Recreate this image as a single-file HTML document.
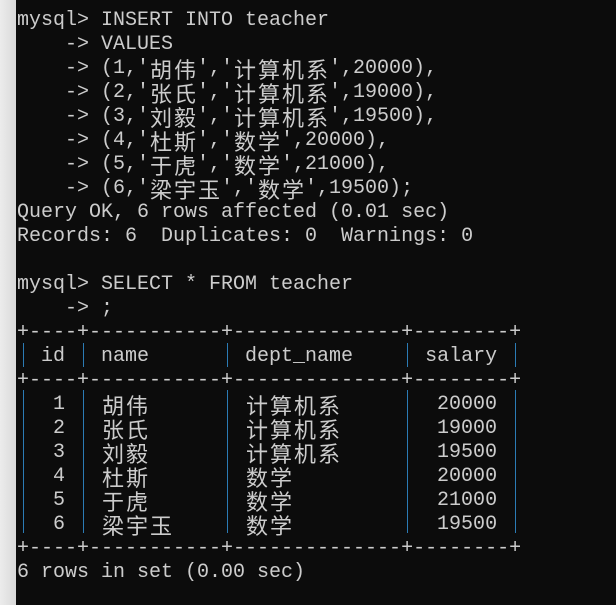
<!DOCTYPE html>
<html><head><meta charset="utf-8">
<style>
html,body{margin:0;padding:0;}
body{width:616px;height:605px;background:#0c0c0c;position:relative;overflow:hidden;
font-family:"Liberation Mono",monospace;font-size:20px;color:#cccccc;}
#strip{position:absolute;left:0;top:0;width:16px;height:605px;background:linear-gradient(to right,#ececec,#d9d9d9);}
.l{position:absolute;left:17px;height:24px;line-height:24px;white-space:pre;}
.c{display:inline-block;width:24px;text-align:center;font-family:"Noto Sans CJK SC",sans-serif;font-size:22px;line-height:24px;vertical-align:top;}
.v{position:absolute;width:1px;background:#2b7bb5;}
</style></head><body>
<div id="strip"></div>
<div class="l" style="top:9px">mysql&gt; INSERT INTO teacher</div>
<div class="l" style="top:33px">    -&gt; VALUES</div>
<div class="l" style="top:57px">    -&gt; (1,'<span class="c">胡</span><span class="c">伟</span>','<span class="c">计</span><span class="c">算</span><span class="c">机</span><span class="c">系</span>',20000),</div>
<div class="l" style="top:81px">    -&gt; (2,'<span class="c">张</span><span class="c">氏</span>','<span class="c">计</span><span class="c">算</span><span class="c">机</span><span class="c">系</span>',19000),</div>
<div class="l" style="top:105px">    -&gt; (3,'<span class="c">刘</span><span class="c">毅</span>','<span class="c">计</span><span class="c">算</span><span class="c">机</span><span class="c">系</span>',19500),</div>
<div class="l" style="top:129px">    -&gt; (4,'<span class="c">杜</span><span class="c">斯</span>','<span class="c">数</span><span class="c">学</span>',20000),</div>
<div class="l" style="top:153px">    -&gt; (5,'<span class="c">于</span><span class="c">虎</span>','<span class="c">数</span><span class="c">学</span>',21000),</div>
<div class="l" style="top:177px">    -&gt; (6,'<span class="c">梁</span><span class="c">宇</span><span class="c">玉</span>','<span class="c">数</span><span class="c">学</span>',19500);</div>
<div class="l" style="top:201px">Query OK, 6 rows affected (0.01 sec)</div>
<div class="l" style="top:225px">Records: 6  Duplicates: 0  Warnings: 0</div>
<div class="l" style="top:273px">mysql&gt; SELECT * FROM teacher</div>
<div class="l" style="top:297px">    -&gt; ;</div>
<div class="l" style="top:321px">+----+-----------+--------------+--------+</div>
<div class="l" style="top:345px">  id   name        dept_name      salary  </div>
<div class="l" style="top:369px">+----+-----------+--------------+--------+</div>
<div class="l" style="top:393px">   1   <span class="c">胡</span><span class="c">伟</span>        <span class="c">计</span><span class="c">算</span><span class="c">机</span><span class="c">系</span>        20000  </div>
<div class="l" style="top:417px">   2   <span class="c">张</span><span class="c">氏</span>        <span class="c">计</span><span class="c">算</span><span class="c">机</span><span class="c">系</span>        19000  </div>
<div class="l" style="top:441px">   3   <span class="c">刘</span><span class="c">毅</span>        <span class="c">计</span><span class="c">算</span><span class="c">机</span><span class="c">系</span>        19500  </div>
<div class="l" style="top:465px">   4   <span class="c">杜</span><span class="c">斯</span>        <span class="c">数</span><span class="c">学</span>            20000  </div>
<div class="l" style="top:489px">   5   <span class="c">于</span><span class="c">虎</span>        <span class="c">数</span><span class="c">学</span>            21000  </div>
<div class="l" style="top:513px">   6   <span class="c">梁</span><span class="c">宇</span><span class="c">玉</span>      <span class="c">数</span><span class="c">学</span>            19500  </div>
<div class="l" style="top:537px">+----+-----------+--------------+--------+</div>
<div class="l" style="top:561px">6 rows in set (0.00 sec)</div>
<div class="v" style="left:23px;top:343px;height:24px"></div>
<div class="v" style="left:83px;top:343px;height:24px"></div>
<div class="v" style="left:227px;top:343px;height:24px"></div>
<div class="v" style="left:407px;top:343px;height:24px"></div>
<div class="v" style="left:515px;top:343px;height:24px"></div>
<div class="v" style="left:23px;top:390px;height:143px"></div>
<div class="v" style="left:83px;top:390px;height:143px"></div>
<div class="v" style="left:227px;top:390px;height:143px"></div>
<div class="v" style="left:407px;top:390px;height:143px"></div>
<div class="v" style="left:515px;top:390px;height:143px"></div>
</body></html>
